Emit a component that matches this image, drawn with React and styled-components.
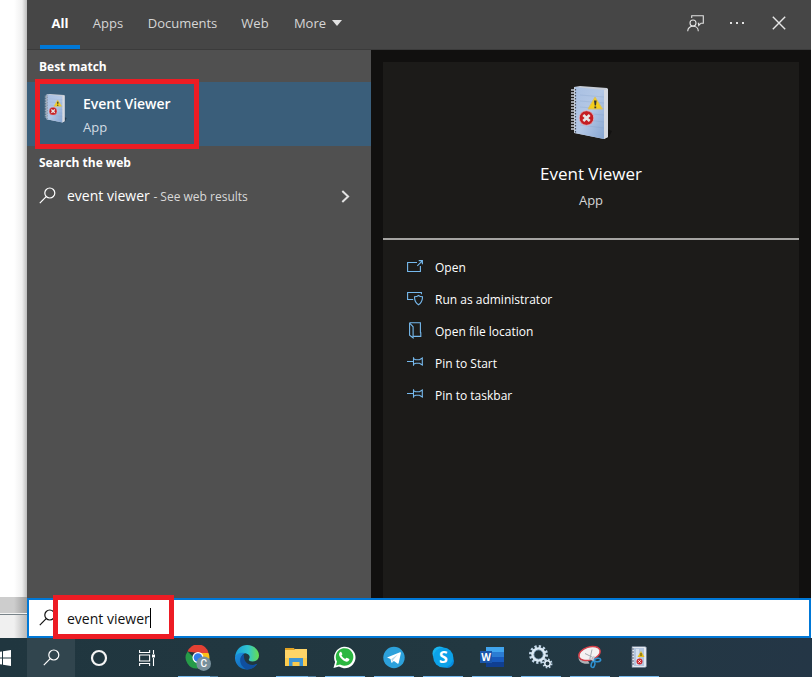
//style
import styled, { createGlobalStyle } from "styled-components";

const GlobalStyle = createGlobalStyle`
  * {
    box-sizing: border-box;
  }

  body {
    margin: 0;
    font-family: "Open Sans", "Noto Sans", sans-serif;
    font-size: 13px;
    line-height: 20px;
    color: #fff;
    background: #fff;
  }

  button,
  input {
    margin: 0;
    padding: 0;
    border: 0;
    font: inherit;
    color: inherit;
    background: none;
  }

  svg {
    display: block;
    flex: none;
  }
`;

//page
const Screen = styled.div`
  display: flex;
  flex-direction: column;
  height: 100vh;
  overflow: hidden;
`;

const Desktop = styled.div`
  flex: 1;
  min-height: 0;
  display: flex;
  padding-right: 1px;
`;

const Backdrop = styled.div`
  width: 27px;
  display: flex;
  flex-direction: column;
  justify-content: flex-end;
  background: linear-gradient(to right, #fff 14px, #f0f0f0 22px, #bdbdbd 27px);
`;

const BackdropScrollbar = styled.div`
  height: 16px;
  background: linear-gradient(to right, #cdcdcd 14px, #9c9c9c);
`;

const BackdropFooter = styled.div`
  height: 25px;
  border-top: 1px solid #f4f4f4;
  background: linear-gradient(to right, #f0f0f0 14px, #b8b8b8);

  &::before {
    content: "";
    display: block;
    height: 1px;
    background: #788389;
  }
`;

const SearchWindow = styled.main`
  flex: 1;
  min-width: 0;
  display: flex;
  flex-direction: column;
`;

//header
const Header = styled.header`
  height: 50px;
  display: flex;
  justify-content: space-between;
  padding: 0 11px 0 13px;
  background: #464646;
  border-bottom: 1px solid #3b3b3b;
`;

const Tabs = styled.nav`
  display: flex;
`;

const Tab = styled.button`
  width: ${({ $width }) => $width}px;
  display: flex;
  align-items: center;
  justify-content: center;
  gap: 6px;
  border-bottom: 4px solid ${({ $active }) => ($active ? "#0078d7" : "transparent")};
  color: ${({ $active }) => ($active ? "#fff" : "#d6d6d6")};
  font-weight: ${({ $active }) => ($active ? 700 : 400)};
`;

const HeaderTools = styled.div`
  display: flex;
`;

const ToolButton = styled.button`
  width: 42px;
  height: 46px;
  display: flex;
  align-items: center;
  justify-content: center;
`;

//results
const Content = styled.div`
  flex: 1;
  min-height: 0;
  display: flex;
`;

const Results = styled.section`
  width: 344px;
  background: #505050;
`;

const GroupTitle = styled.h2`
  margin: 0;
  padding: 7px 12px 5px;
  font-size: 12px;
  font-weight: 700;
`;

const BestMatch = styled.button`
  position: relative;
  width: 100%;
  height: 64px;
  display: flex;
  align-items: flex-start;
  gap: 16px;
  padding: 12px 0 0 17px;
  text-align: left;
  background: #3a5e7a;
`;

const MatchText = styled.span`
  display: flex;
  flex-direction: column;
  gap: 3px;
`;

const MatchName = styled.span`
  font-size: 14px;
  font-weight: 600;
`;

const MatchKind = styled.span`
  color: #d3dce3;
`;

const WebResult = styled.button`
  width: 100%;
  height: 36px;
  display: flex;
  align-items: center;
  padding: 0 21px 0 12px;
  text-align: left;
`;

const WebText = styled.span`
  flex: 1;
  padding-left: 11px;
  font-size: 14px;
`;

const WebHint = styled.span`
  font-size: 12px;
  color: #d9d9d9;
`;

//preview
const Preview = styled.section`
  flex: 1;
  min-width: 0;
  display: flex;
  padding: 12px 12px 0;
  background: #11100f;
`;

const Card = styled.div`
  flex: 1;
  background: #1c1b19;
`;

const Hero = styled.div`
  height: 178px;
  display: flex;
  flex-direction: column;
  align-items: center;
  padding-top: 24px;
  border-bottom: 2px solid #a5a4a2;
`;

const HeroName = styled.h1`
  margin: 20px 0 4px;
  font-size: 17px;
  font-weight: 400;
  line-height: 24px;
`;

const HeroKind = styled.span`
  color: #d6d6d6;
`;

const Actions = styled.ul`
  margin: 0;
  padding: 12px 24px;
  list-style: none;
`;

const Action = styled.button`
  width: 100%;
  height: 32px;
  display: flex;
  align-items: center;
  gap: 12px;
  font-size: 12px;
  text-align: left;
`;

//search box
const SearchBox = styled.label`
  position: relative;
  height: 40px;
  display: flex;
  align-items: center;
  gap: 11px;
  padding-left: 10px;
  border: 2px solid #0078d7;
  background: #fff;
  color: #111;
`;

const SearchInput = styled.input`
  flex: 1;
  height: 32px;
  font-size: 14px;
  outline: none;
`;

const Caret = styled.span`
  position: absolute;
  left: 121px;
  top: 8px;
  width: 1px;
  height: 20px;
  background: #000;
`;

const Highlight = styled.span`
  position: absolute;
  z-index: 1;
  left: ${({ $left }) => $left}px;
  top: ${({ $top }) => $top}px;
  width: ${({ $width }) => $width}px;
  height: ${({ $height }) => $height}px;
  border: 5px solid #ed1c24;
  pointer-events: none;
`;

//taskbar
const Taskbar = styled.footer`
  height: 39px;
  display: flex;
  background: linear-gradient(to right, #20363f, #223841 60%, #243646);
`;

const SystemButton = styled.button`
  width: ${({ $width }) => $width || 48}px;
  display: flex;
  align-items: center;
  justify-content: ${({ $start }) => ($start ? "flex-start" : "center")};
  background: ${({ $active }) => ($active ? "#31454e" : "none")};
`;

const Apps = styled.div`
  display: flex;
  gap: 1px;
  padding-left: 3px;
`;

const AppButton = styled.button`
  width: 48px;
  display: flex;
  flex-direction: column;
  align-items: center;
  justify-content: space-between;
  padding-top: 7px;

  &::after {
    content: "";
    width: 40px;
    height: 1px;
    background: ${({ $running, $stacked }) =>
      !$running
        ? "none"
        : $stacked
          ? "linear-gradient(to right, #76b9ed 32px, #4f7d9e 32px)"
          : "#76b9ed"};
  }
`;

//icons
const SearchIcon = () => (
  <svg width="17" height="18" viewBox="0 0 17 18" fill="none" stroke="currentColor" strokeWidth="1.2">
    <circle cx="10.8" cy="6" r="5" />
    <path d="M7.2 9.7 .8 16.2" />
  </svg>
);

const FeedbackIcon = () => (
  <svg width="17" height="17" viewBox="0 0 17 17" fill="none" stroke="#e2e2e2" strokeWidth="1.1">
    <circle cx="6" cy="8" r="3" />
    <path d="M.7 16.3C.7 9.6 11.3 9.6 11.3 16.3" />
    <path d="M4.7 3V.8h11.6v7.4h-2.2l-2.4 2.3V8.2h-.9" />
  </svg>
);

const MoreIcon = () => (
  <svg width="16" height="4" viewBox="0 0 16 4" fill="#e2e2e2">
    <path d="M1 1h2v2H1zM7 1h2v2H7zM13 1h2v2h-2z" />
  </svg>
);

const CloseIcon = () => (
  <svg width="14" height="14" viewBox="0 0 14 14" stroke="#e6e6e6" strokeWidth="1.4">
    <path d="M.8.8l12.4 12.4M13.2.8.8 13.2" />
  </svg>
);

const DownIcon = () => (
  <svg width="10" height="6" viewBox="0 0 10 6" fill="#e2e2e2">
    <path d="M0 0h10L5 6z" />
  </svg>
);

const ChevronIcon = () => (
  <svg width="9" height="13" viewBox="0 0 9 13" fill="none" stroke="#e2e2e2" strokeWidth="2">
    <path d="M1.3 1l5.8 5.5-5.8 5.5" />
  </svg>
);

const actionPaths = {
  open: <path d="M10 4.5H.6v9h12.8V8M10.3 7.8l5-5M11.7 2.6h3.7v3.7" />,
  admin: (
    <>
      <path d="M6.2 9.5H.6v-7h13.8v1.8" />
      <path d="M11.5 5.5c-1.2 1-2.5 1.3-4 1.3 0 4 .9 6.3 4 8 3.1-1.7 4-4 4-8-1.5 0-2.8-.3-4-1.3z" />
    </>
  ),
  folder: (
    <>
      <path d="M2.6.8h10.8v10h.4v3.6H6.2" />
      <path d="M2.6.8v12.4l3.5 2.6V4.8L2.6 1" />
    </>
  ),
  pin: <path d="M0 7.5h6.2M6.5 3.3v8.4M6.5 4.8l2.2 1h3.8l2.8-1.8v7l-2.8-1.8H8.7l-2.2 1" />,
};

const ActionIcon = ({ name }) => (
  <svg width="16" height="20" viewBox="0 0 16 20" fill="none" stroke="#76b9ed" strokeWidth="1.1">
    {actionPaths[name]}
  </svg>
);

const EventViewerIcon = ({ width, height }) => (
  <svg width={width} height={height} viewBox="0 0 42 56">
    <defs>
      <linearGradient id="cover" x1="0" y1="0" x2="1" y2="1">
        <stop offset="0" stopColor="#a9c0e2" />
        <stop offset=".5" stopColor="#b4c8e6" />
        <stop offset="1" stopColor="#86a6d2" />
      </linearGradient>
    </defs>
    <path d="M37 43l5 2-3 6-3 2z" fill="#000" opacity=".35" />
    <path d="M4 1l6-1 27 2 1 1v48l-4 2L4 47z" fill="#c6ccd6" />
    <path d="M5 1l29 3v49L5 47z" fill="url(#cover)" />
    <path d="M34 4l4-1v48l-4 2z" fill="#d5d9e1" />
    <path
      d="M10 9l24 2M10 15l24 2M10 21l24 2M10 27l24 2M10 33l24 3M10 39l24 3"
      stroke="#7f9cc6"
      strokeWidth=".5"
      opacity=".5"
    />
    <path
      d="M1 4h5M1 7h5M1 10h5M1 13h5M1 16h5M1 19h5M1 22h5M1 25h5M1 28h5M1 31h5M1 34h5M1 37h5M1 40h5M1 43h5"
      stroke="#c9ced8"
      strokeWidth="1.3"
    />
    <path d="M5.500 3v44" stroke="#454d5c" strokeWidth="1.2" strokeDasharray="1.5 1.5" />
    <path d="M25 11l7.500 12H18z" fill="#f4ce1b" stroke="#d9c069" strokeWidth="1" strokeLinejoin="round" />
    <path d="M24 14.500h2.600l-.6 5h-1.300zM24.400 20.500h1.800v1.800h-1.800z" fill="#333" />
    <circle cx="16.500" cy="32" r="7.300" fill="#c51d22" stroke="#e0b7c1" strokeWidth=".8" />
    <path d="M13.300 29l6.400 6M19.700 29l-6.400 6" stroke="#e6e6e6" strokeWidth="2.600" />
  </svg>
);

const WindowsIcon = () => (
  <svg width="11" height="16" viewBox="0 0 11 16" fill="#fff">
    <path d="M0 1.7l2-.3v6H0zM3 1.2l8-1.2v7.4H3zM0 8.5h2v6l-2-.3zM3 8.5h8V16l-8-1.2z" />
  </svg>
);

const CortanaIcon = () => (
  <svg width="18" height="18" viewBox="0 0 18 18" fill="none" stroke="#f5f5f5" strokeWidth="2.2">
    <circle cx="9" cy="9" r="7" />
  </svg>
);

const TaskViewIcon = () => (
  <svg width="17" height="16" viewBox="0 0 17 16" fill="none" stroke="#fff" strokeWidth="1.1">
    <path d="M.6 0v2.5h10V0M.6 16v-2.5h10V16M.6 5h10v6H.6zM14.5 0v4M14.5 8v8" />
    <path d="M13 4.5h3v3h-3z" fill="#fff" stroke="none" />
  </svg>
);

const ChromeIcon = () => (
  <svg width="26" height="26" viewBox="0 0 26 26">
    <path d="M2.500 6.500A11 11 0 0 1 23.500 8H13z" fill="#e34133" />
    <path d="M23.500 8A11 11 0 0 1 13 23.500l5-9.500-5-6z" fill="#fbc116" />
    <path d="M2.500 6.500A11 11 0 0 0 13 23.500l4-8-6-1z" fill="#269b48" />
    <circle cx="13" cy="12.500" r="5.500" fill="#fff" />
    <circle cx="13" cy="12.500" r="4.300" fill="#327ce9" />
    <circle cx="18.700" cy="18.700" r="7.300" fill="#78909c" />
    <text x="18.700" y="22.300" textAnchor="middle" fontSize="10" fontWeight="500" fontFamily="Roboto, sans-serif" fill="#fff">
      C
    </text>
  </svg>
);

const EdgeIcon = () => (
  <svg width="24" height="26" viewBox="0 0 24 26">
    <defs>
      <linearGradient id="edgeTop" x1="0" y1=".5" x2="1" y2=".5">
        <stop offset="0" stopColor="#179fdc" />
        <stop offset=".55" stopColor="#31c5cf" />
        <stop offset="1" stopColor="#68df4c" />
      </linearGradient>
      <linearGradient id="edgeBottom" x1="0" y1="0" x2="1" y2="1">
        <stop offset="0" stopColor="#1d91df" />
        <stop offset="1" stopColor="#0b57a8" />
      </linearGradient>
    </defs>
    <path
      d="M0 12C1 4 6 0 12 0c7 0 12 5 12 10.5 0 4-3 6-6.5 6-3 0-4.3-1.3-3.5-2.3 2-3.3-.8-6-4.8-6C5 8.2 2 9.6 0 12z"
      fill="url(#edgeTop)"
    />
    <path
      d="M0 12c2-4 6-5 10-3.8-3.5 1-4.5 5-3 8.5 2.3 5.3 9 5.5 15.3 2C20 22 16.5 24.5 12 24.5 5 24.5-.5 19 0 12z"
      fill="url(#edgeBottom)"
    />
    <path d="M9 9c-6 3-5 12 3 15.5 4 0 8-2 10.3-5.700C15 22 8 18 9 9z" fill="#104f9f" />
  </svg>
);

const ExplorerIcon = () => (
  <svg width="22" height="25" viewBox="0 0 22 25">
    <path d="M0 3h9l1 2H0z" fill="#e2a323" />
    <path d="M0 5h9l1-1h12v17H0z" fill="#ffd568" />
    <path d="M0 13h22v8H0z" fill="#fbcb4c" />
    <path d="M4 21v-8h14v8h-3.500v-4h-7v4z" fill="#3f95d4" />
  </svg>
);

const WhatsAppIcon = () => (
  <svg width="24" height="25" viewBox="0 0 24 25">
    <path d="M.5 23l1.600-6A10.700 10.700 0 1 1 6 21.500z" fill="#fff" />
    <path d="M3 20.500l1-4A8.800 8.800 0 1 1 7 19.500z" fill="#2bb741" />
    <path
      d="M7.600 6.700c-2.700 1.500-1.600 4.500 1.200 7.200 3 3 6 3.700 7.300 1.400.5-1 .4-1.300-.2-1.600l-2.200-1c-.5-.2-.9.7-1.500 1.200-1.600-.6-2.900-1.800-3.700-3.300.4-.6 1-.9.8-1.500l-1-2.100c-.1-.3-.4-.4-.7-.3z"
      fill="#fff"
    />
  </svg>
);

const TelegramIcon = () => (
  <svg width="22" height="25" viewBox="0 0 22 25">
    <circle cx="11" cy="12.500" r="10.700" fill="#2ca1db" />
    <path
      d="M4 12.500l13-5.300c.6-.2 1 .1.900.8l-2.200 10c-.2.800-.7.900-1.300.5l-3.500-2.600-1.700 1.700c-.5.500-.8.200-.9-.3l-.8-3.400z"
      fill="#fff"
    />
    <path d="M8.300 13.900l6.500-4.400-4.900 5.800-.4 2.200z" fill="#b7d8e9" />
  </svg>
);

const SkypeIcon = () => (
  <svg width="23" height="25" viewBox="0 0 23 25">
    <circle cx="7.500" cy="8.500" r="7" fill="#19b5ef" />
    <circle cx="15" cy="16" r="7" fill="#078be0" />
    <circle cx="11.300" cy="12.500" r="10" fill="#0ca2e9" />
    <text x="11.500" y="18" textAnchor="middle" fontSize="16" fontWeight="700" fontFamily="Open Sans, sans-serif" fill="#fff">
      S
    </text>
  </svg>
);

const WordIcon = () => (
  <svg width="24" height="24" viewBox="0 0 24 24">
    <path d="M6 2h18v5H6z" fill="#41a5ee" />
    <path d="M6 7h18v5H6z" fill="#2b7cd3" />
    <path d="M6 12h18v5H6z" fill="#185abd" />
    <path d="M6 17h18v5H6z" fill="#103f91" />
    <path d="M0 6h12v12H0z" fill="#1b56ab" />
    <text x="6" y="16" textAnchor="middle" fontSize="10" fontWeight="700" fontFamily="Open Sans, sans-serif" fill="#fff">
      W
    </text>
  </svg>
);

const GearsIcon = () => (
  <svg width="24" height="25" viewBox="0 0 24 25" fill="none">
    <circle cx="9.500" cy="9.500" r="8" stroke="#c5d9eb" strokeWidth="3" strokeDasharray="2.200 1.990" />
    <circle cx="9.500" cy="9.500" r="6" stroke="#dceaf5" strokeWidth="2.500" />
    <circle cx="9.500" cy="9.500" r="4.500" stroke="#88aac7" strokeWidth=".7" />
    <circle cx="18.500" cy="18.500" r="4" stroke="#bdd3e5" strokeWidth="2" strokeDasharray="1.600 1.542" />
    <circle cx="18.500" cy="18.500" r="2.700" stroke="#e2eef7" strokeWidth="1.500" />
  </svg>
);

const SnippingIcon = () => (
  <svg width="26" height="25" viewBox="0 0 26 25" fill="none">
    <path d="M1.500 11c0 4 4 5 9 4l2 3.500C7 19.500 1 18 1.500 11z" fill="#aeb3b8" />
    <ellipse
      cx="12.500"
      cy="8.500"
      rx="11"
      ry="6.500"
      transform="rotate(-18 12.500 8.500)"
      fill="#f4f2f2"
      stroke="#d5404a"
      strokeWidth="1.400"
    />
    <path d="M15 4.500l-2 9M8 8.500l8 4" stroke="#a4a9af" strokeWidth="1" />
    <path d="M12 13l6 3M16 16l1-5" stroke="#c5ced6" strokeWidth="1.500" />
    <ellipse cx="20.500" cy="15" rx="3.200" ry="1.800" transform="rotate(-8 20.500 15)" stroke="#2f92d3" strokeWidth="1.500" />
    <ellipse cx="16" cy="19.500" rx="1.800" ry="3" transform="rotate(15 16 19.500)" stroke="#2f92d3" strokeWidth="1.500" />
  </svg>
);

const EventLogIcon = () => (
  <svg width="16" height="24" viewBox="0 0 16 24">
    <path d="M1 1.500h13l1.500 1v19l-1.500 1H1z" fill="#e3e8f0" stroke="#68788c" strokeWidth=".7" />
    <path d="M3 3h10v18H3z" fill="#b3c5de" />
    <path d="M5 4h3v16H5z" fill="#d3dfef" />
    <path d="M0 4h3M0 7h3M0 10h3M0 13h3M0 16h3M0 19h3" stroke="#566174" />
    <path d="M10 6l3.500 6H6.500z" fill="#e3bd1c" />
    <path d="M9.500 8h1v3h-1z" fill="#5b4a10" />
    <circle cx="8.500" cy="16.500" r="3" fill="#cf2931" />
    <path d="M7.300 15.300l2.400 2.400M9.700 15.300l-2.400 2.400" stroke="#fff" strokeWidth=".9" />
  </svg>
);

//data
const tabs = [
  { label: "All", width: 40 },
  { label: "Apps", width: 56 },
  { label: "Documents", width: 93 },
  { label: "Web", width: 52 },
  { label: "More", width: 74, menu: true },
];

const actions = [
  { icon: "open", label: "Open" },
  { icon: "admin", label: "Run as administrator" },
  { icon: "folder", label: "Open file location" },
  { icon: "pin", label: "Pin to Start" },
  { icon: "pin", label: "Pin to taskbar" },
];

const apps = [
  { name: "Chrome", Icon: ChromeIcon, running: true, stacked: true },
  { name: "Edge", Icon: EdgeIcon },
  { name: "File Explorer", Icon: ExplorerIcon, running: true, stacked: true },
  { name: "WhatsApp", Icon: WhatsAppIcon, running: true },
  { name: "Telegram", Icon: TelegramIcon, running: true },
  { name: "Skype", Icon: SkypeIcon, running: true },
  { name: "Word", Icon: WordIcon, running: true },
  { name: "Services", Icon: GearsIcon, running: true },
  { name: "Snipping Tool", Icon: SnippingIcon, running: true },
  { name: "Event Viewer", Icon: EventLogIcon, running: true },
];

const WindowHeader = () => {
  return (
    <Header>
      <Tabs>
        {tabs.map(({ label, width, menu }) => (
          <Tab key={label} $width={width} $active={label === "All"}>
            {label}
            {menu && <DownIcon />}
          </Tab>
        ))}
      </Tabs>
      <HeaderTools>
        <ToolButton aria-label="Feedback">
          <FeedbackIcon />
        </ToolButton>
        <ToolButton aria-label="Options">
          <MoreIcon />
        </ToolButton>
        <ToolButton aria-label="Close">
          <CloseIcon />
        </ToolButton>
      </HeaderTools>
    </Header>
  );
};

const ResultList = () => {
  return (
    <Results>
      <GroupTitle>Best match</GroupTitle>
      <BestMatch>
        <EventViewerIcon width={23} height={30} />
        <MatchText>
          <MatchName>Event Viewer</MatchName>
          <MatchKind>App</MatchKind>
        </MatchText>
        <Highlight $left={8} $top={-3} $width={164} $height={70} />
      </BestMatch>
      <GroupTitle>Search the web</GroupTitle>
      <WebResult>
        <SearchIcon />
        <WebText>
          event viewer <WebHint>- See web results</WebHint>
        </WebText>
        <ChevronIcon />
      </WebResult>
    </Results>
  );
};

const PreviewPane = () => {
  return (
    <Preview>
      <Card>
        <Hero>
          <EventViewerIcon width={42} height={56} />
          <HeroName>Event Viewer</HeroName>
          <HeroKind>App</HeroKind>
        </Hero>
        <Actions>
          {actions.map(({ icon, label }) => (
            <li key={label}>
              <Action>
                <ActionIcon name={icon} />
                {label}
              </Action>
            </li>
          ))}
        </Actions>
      </Card>
    </Preview>
  );
};

const App = () => {
  return (
    <Screen>
      <GlobalStyle />
      <Desktop>
        <Backdrop>
          <BackdropScrollbar />
          <BackdropFooter />
        </Backdrop>
        <SearchWindow>
          <WindowHeader />
          <Content>
            <ResultList />
            <PreviewPane />
          </Content>
          <SearchBox>
            <SearchIcon />
            <SearchInput type="text" aria-label="Search" defaultValue="event viewer" />
            <Caret />
            <Highlight $left={24} $top={-5} $width={121} $height={44} />
          </SearchBox>
        </SearchWindow>
      </Desktop>
      <Taskbar>
        <SystemButton $width={27} $start aria-label="Start">
          <WindowsIcon />
        </SystemButton>
        <SystemButton $active aria-label="Search">
          <SearchIcon />
        </SystemButton>
        <SystemButton aria-label="Cortana">
          <CortanaIcon />
        </SystemButton>
        <SystemButton aria-label="Task view">
          <TaskViewIcon />
        </SystemButton>
        <Apps>
          {apps.map(({ name, Icon, running, stacked }) => (
            <AppButton key={name} aria-label={name} $running={running} $stacked={stacked}>
              <Icon />
            </AppButton>
          ))}
        </Apps>
      </Taskbar>
    </Screen>
  );
};

export default App;
